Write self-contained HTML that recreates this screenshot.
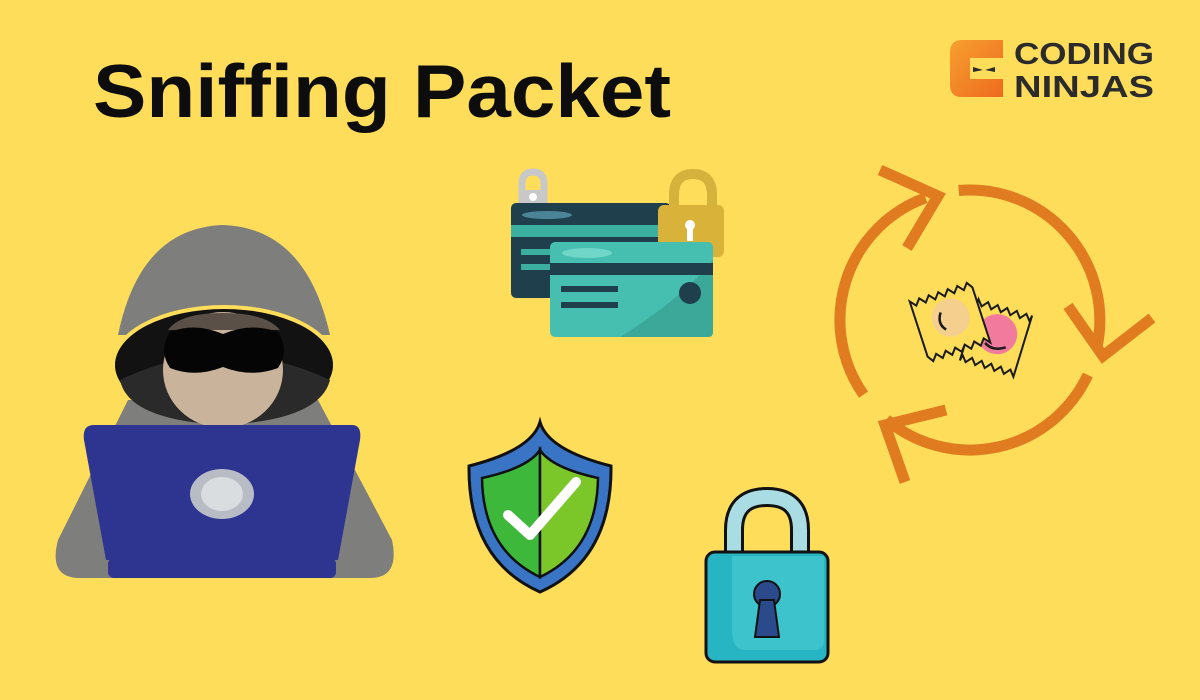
<!DOCTYPE html>
<html><head><meta charset="utf-8"><style>
html,body{margin:0;padding:0;background:#FEDD5A;}
svg{display:block}
</style></head><body>
<svg width="1200" height="700" viewBox="0 0 1200 700" xmlns="http://www.w3.org/2000/svg">
<rect width="1200" height="700" fill="#FEDD5A"/>
<text x="93" y="117" font-family="Liberation Sans, sans-serif" font-weight="bold" font-size="75" fill="#0d0d0d" textLength="578" lengthAdjust="spacingAndGlyphs">Sniffing Packet</text>

<!-- logo -->
<defs><linearGradient id="og" x1="0" y1="0" x2="1" y2="1"><stop offset="0" stop-color="#F7A030"/><stop offset="1" stop-color="#EE6A1E"/></linearGradient></defs>
<path d="M962 40 H1003 V58 H970 V79 H1003 V97 H962 Q950 97 950 85 V52 Q950 40 962 40 Z" fill="url(#og)"/>
<path d="M973 67 L983 70 L973 72 Z M995 67 L985 70 L995 72 Z" fill="#2b2b2b"/>
<text x="1014" y="64" font-family="Liberation Sans, sans-serif" font-weight="bold" font-size="31" fill="#2b2b2b" textLength="140" lengthAdjust="spacingAndGlyphs">CODING</text>
<text x="1014" y="97" font-family="Liberation Sans, sans-serif" font-weight="bold" font-size="31" fill="#2b2b2b" textLength="140" lengthAdjust="spacingAndGlyphs">NINJAS</text>

<!-- hacker -->
<path d="M128 400 L318 400 L392 540 Q400 578 370 578 L80 578 Q48 578 58 540 Z" fill="#7e7e7c"/>
<path d="M118 335 Q140 228 223 225 Q306 228 330 335 Z" fill="#7e7e7c"/>
<ellipse cx="224" cy="363" rx="112" ry="58" fill="#FEDD5A"/>
<ellipse cx="224" cy="365" rx="109" ry="56" fill="#121212"/>
<path d="M120 380 Q224 330 330 380 Q320 420 224 425 Q128 420 120 380 Z" fill="#2a2a2a"/>
<ellipse cx="223" cy="370" rx="60" ry="58" fill="#C9B49B"/>
<path d="M223 313 Q180 313 168 330 L280 330 Q266 313 223 313 Z" fill="#5a5048"/>
<path d="M170 332 Q195 322 223 334 Q251 322 278 332 Q290 350 278 368 Q251 378 223 367 Q195 378 170 368 Q158 350 170 332 Z" fill="#050505"/>
<path d="M94 425 L352 425 Q362 425 360 440 L338 560 L106 560 L84 440 Q82 425 94 425 Z" fill="#2E3591"/>
<rect x="108" y="558" width="228" height="20" rx="6" fill="#2E3591"/>
<ellipse cx="222" cy="494" rx="32" ry="25" fill="#B8BCC5"/>
<ellipse cx="222" cy="494" rx="21" ry="17" fill="#D9DDE0"/>

<!-- cards -->
<path d="M522 205 V184 Q522 172 533 172 Q544 172 544 184 V205" fill="none" stroke="#C8C8C8" stroke-width="7"/>
<rect x="519" y="190" width="28" height="16" rx="2" fill="#C8C8C8"/>
<circle cx="533" cy="197" r="4" fill="#fff"/>
<rect x="511" y="203" width="160" height="95" rx="5" fill="#1F3F4D"/>
<rect x="511" y="225" width="160" height="12" fill="#3BB0A1"/>
<ellipse cx="547" cy="215" rx="25" ry="4" fill="#4A8496"/>
<rect x="521" y="249" width="34" height="6" fill="#3BB0A1"/>
<rect x="521" y="264" width="34" height="6" fill="#3BB0A1"/>
<path d="M674 215 V195 Q674 174 693 174 Q712 174 712 195 V215" fill="none" stroke="#D4B23C" stroke-width="10"/>
<rect x="658" y="205" width="66" height="52" rx="6" fill="#D9B23A"/>
<circle cx="690" cy="225" r="5" fill="#fff"/><rect x="687" y="225" width="6" height="16" fill="#fff"/>
<rect x="550" y="242" width="163" height="95" rx="5" fill="#46BFB0"/>
<path d="M620 337 Q680 300 713 260 V332 Q713 337 708 337 Z" fill="#3BA89A"/>
<rect x="550" y="263" width="163" height="12" fill="#1F3F4D"/>
<ellipse cx="587" cy="253" rx="25" ry="5" fill="#6FD6C8"/>
<rect x="561" y="286" width="57" height="6" fill="#1F3F4D"/>
<rect x="561" y="302" width="57" height="6" fill="#1F3F4D"/>
<circle cx="690" cy="293" r="11" fill="#1F3F4D"/>

<!-- recycle arrows -->
<g fill="none" stroke="#E07B20" stroke-width="11" stroke-linecap="butt" stroke-linejoin="miter">
<path d="M958.7 190.5 A130 130 0 0 1 1097 347"/>
<path d="M1087.8 374.9 A130 130 0 0 1 886.4 419.6"/>
<path d="M863.5 394.6 A130 130 0 0 1 925.5 197.8"/>
<polyline points="880,170 938,196 907,248"/>
<polyline points="1068,306 1103,356 1152,318"/>
<polyline points="946,410 885,425 905,482"/>
</g>
<!-- packets -->
<g stroke="#1b1b1b" stroke-width="2" stroke-linejoin="miter">
<g transform="translate(996,338) rotate(17)">
<path d="M-28 -32 L-23 -26 L-18 -32 L-13 -26 L-8 -32 L-3 -26 L2 -32 L7 -26 L12 -32 L17 -26 L22 -32 L27 -26 L28 -32 L28 32 L23 26 L18 32 L13 26 L8 32 L3 26 L-2 32 L-7 26 L-12 32 L-17 26 L-22 32 L-27 26 L-28 32 Z" fill="#FEDD5A"/>
<circle cx="0" cy="-4" r="20" fill="#F27A9C" stroke="none"/>
<path d="M-9 8 Q1 14 12 6" fill="none" stroke-width="2.5"/>
</g>
<g transform="translate(950,322) rotate(-18)">
<path d="M-32 -32 L-27 -26 L-22 -32 L-17 -26 L-12 -32 L-7 -26 L-2 -32 L3 -26 L8 -32 L13 -26 L18 -32 L23 -26 L28 -32 L32 -26 L32 32 L27 26 L22 32 L17 26 L12 32 L7 26 L2 32 L-3 26 L-8 32 L-13 26 L-18 32 L-23 26 L-28 32 L-32 26 Z" fill="#FEDD5A"/>
<circle cx="2" cy="-4" r="19" fill="#F5CF8E" stroke="none"/>
<path d="M-6 -12 Q-13 -2 -6 6" fill="none" stroke-width="2.5"/>
</g>
</g>

<!-- shield -->
<path d="M540 422 Q548 450 611 466 Q612 560 540 592 Q468 560 469 466 Q532 450 540 422 Z" fill="#3A74C4" stroke="#111" stroke-width="3"/>
<path d="M540 450 L540 577 Q483 550 482 478 Q528 468 540 450 Z" fill="#3DB83A" stroke="#111" stroke-width="2.5"/>
<path d="M540 450 Q552 468 598 478 Q597 550 540 577 Z" fill="#7BC72A" stroke="#111" stroke-width="2.5"/>
<polyline points="508,515 530,535 576,482" fill="none" stroke="#fff" stroke-width="10" stroke-linecap="round" stroke-linejoin="round"/>

<!-- padlock -->
<path d="M734 556 V530 Q734 497 767 497 Q800 497 800 530 V556" fill="none" stroke="#111" stroke-width="20"/>
<path d="M734 556 V530 Q734 497 767 497 Q800 497 800 530 V556" fill="none" stroke="#A9DDE3" stroke-width="14"/>
<rect x="706" y="552" width="122" height="110" rx="9" fill="#27B5C4" stroke="#111" stroke-width="3"/>
<path d="M732 556 H824 V640 Q824 650 814 650 H745 Q732 650 732 630 Z" fill="#3DC3CC"/>
<circle cx="767" cy="594" r="13" fill="#2A4A8C" stroke="#111" stroke-width="2"/>
<path d="M760 600 L755 637 H779 L774 600 Z" fill="#2A4A8C" stroke="#111" stroke-width="2"/>
</svg>
</body></html>
